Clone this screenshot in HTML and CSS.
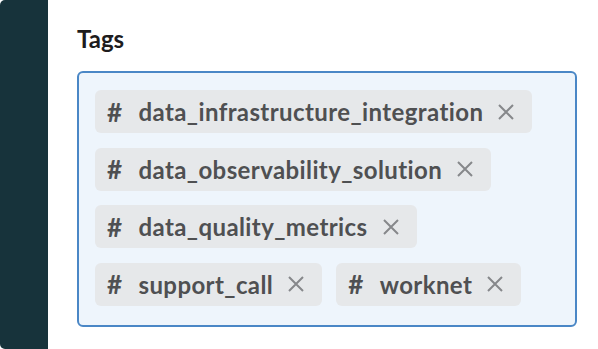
FILE: index.html
```html
<!DOCTYPE html>
<html lang="en">
<head>
<meta charset="UTF-8" />
<meta name="viewport" content="width=device-width, initial-scale=1" />
<title>Tags</title>
<link rel="stylesheet" href="styles.css">
</head>
<body>

<aside class="sidebar"></aside>

<main class="panel">
  <label class="field-label">Tags</label>

  <div class="tag-box">
    <span class="tag"><span class="hash">#</span>data_infrastructure_integration<button class="remove" aria-label="Remove"><svg viewBox="0 0 18 18"><path d="M2 2L16 16M16 2L2 16"/></svg></button></span>
    <span class="tag"><span class="hash">#</span>data_observability_solution<button class="remove" aria-label="Remove"><svg viewBox="0 0 18 18"><path d="M2 2L16 16M16 2L2 16"/></svg></button></span>
    <span class="tag"><span class="hash">#</span>data_quality_metrics<button class="remove" aria-label="Remove"><svg viewBox="0 0 18 18"><path d="M2 2L16 16M16 2L2 16"/></svg></button></span>
    <span class="tag"><span class="hash">#</span>support_call<button class="remove" aria-label="Remove"><svg viewBox="0 0 18 18"><path d="M2 2L16 16M16 2L2 16"/></svg></button></span>
    <span class="tag"><span class="hash">#</span>worknet<button class="remove" aria-label="Remove"><svg viewBox="0 0 18 18"><path d="M2 2L16 16M16 2L2 16"/></svg></button></span>
  </div>
</main>

</body>
</html>
```

FILE: styles.css
```css
html, body {
  height: 100%;
}
body {
  display: flex;
  margin: 0; padding: 0;
  background: white;
  font-family: Lato, "Noto Sans", sans-serif;
  color: #1d1c1d;
}
.sidebar {
  width: 48px;
  flex-shrink: 0;
  background: #17333b;
  border-radius: 5px 0 0 5px;
}
.panel {
  flex: 1;
  padding: 23px 21px 0 29px;
}
.field-label {
  display: block;
  font-size: 24px;
  font-weight: bold;
  line-height: 32px;
  margin-bottom: 16px;
}
.tag-box {
  display: flex;
  flex-wrap: wrap;
  gap: 14.5px 14px;
  padding: 17px 16px 19px;
  background: #eef5fc;
  border: 2px solid #4a87c6;
  border-radius: 6px;
}
.tag {
  display: flex;
  align-items: center;
  height: 43px;
  padding: 0 17px 0 12px;
  background: #e6e8ea;
  border-radius: 6px;
  font-size: 24px;
  font-weight: bold;
  letter-spacing: 0.4px;
  color: #4f5052;
}
.hash {
  font-size: 26px;
  margin-right: 16px;
}
.remove {
  display: flex;
  margin-left: 14px;
  padding: 0;
  border: none;
  background: none;
  cursor: pointer;
}
.remove svg {
  width: 18px;
  height: 18px;
  fill: none;
  stroke: #86888b;
  stroke-width: 2;
}
```
